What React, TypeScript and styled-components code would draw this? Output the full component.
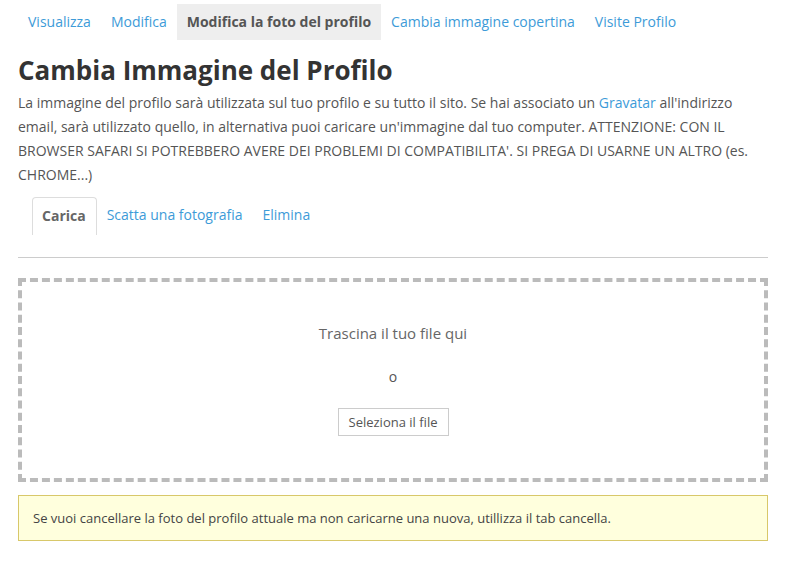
import React from "react";
import styled, { createGlobalStyle } from "styled-components";

const Global = createGlobalStyle`
  html, body { margin: 0; padding: 0; background: #fff; }
  body { font-family: "Open Sans", "Liberation Sans", sans-serif; color: #555; font-size: 14px; }
  * { box-sizing: border-box; }
`;

const Page = styled.div`
  padding: 4px 23px 0 18px;
`;

const TopNav = styled.nav`
  display: flex;
`;

const TopTab = styled.a<{ $active?: boolean }>`
  display: block;
  height: 36px;
  line-height: 36px;
  padding: 0 10px;
  font-size: 14px;
  text-decoration: none;
  color: ${(p) => (p.$active ? "#555" : "#3d9bd8")};
  font-weight: ${(p) => (p.$active ? 700 : 400)};
  background: ${(p) => (p.$active ? "#eee" : "transparent")};
`;

const Title = styled.h1`
  margin: 12px 0 0;
  font-size: 26px;
  line-height: 36px;
  font-weight: 700;
  color: #333;
`;

const Intro = styled.p`
  margin: 3px 0 0;
  font-size: 14px;
  line-height: 24px;
  color: #555;
`;

const Link = styled.a`
  color: #3d9bd8;
  text-decoration: none;
`;

const SubTabs = styled.div`
  display: flex;
  padding: 10px 0 0 14px;
`;

const SubTab = styled.a<{ $active?: boolean }>`
  display: block;
  height: 38px;
  line-height: ${(p) => (p.$active ? "35px" : "36px")};
  padding: ${(p) => (p.$active ? "0 10px 0 9px" : "0 10px")};
  font-size: 14px;
  text-decoration: none;
  border: ${(p) => (p.$active ? "1px solid #ddd" : "none")};
  border-bottom: none;
  border-radius: 4px 4px 0 0;
  color: ${(p) => (p.$active ? "#666" : "#3d9bd8")};
  font-weight: ${(p) => (p.$active ? 700 : 400)};
`;

const Rule = styled.hr`
  margin: 22px 0 0;
  border: none;
  border-top: 1px solid #ccc;
`;

const DropZone = styled.div`
  margin-top: 20px;
  height: 204px;
  border: 4px dashed #bbb;
  display: flex;
  flex-direction: column;
  align-items: center;
  padding-top: 40px;
`;

const DropText = styled.div`
  font-size: 15px;
  line-height: 22px;
  color: #666;
`;

const OrText = styled.div`
  margin-top: 22px;
  font-size: 14px;
  line-height: 22px;
  color: #555;
`;

const FileButton = styled.button`
  margin-top: 20px;
  height: 28px;
  width: 111px;
  padding: 0;
  background: #fff;
  border: 1px solid #ccc;
  font-family: "Open Sans", "Liberation Sans", sans-serif;
  font-size: 13px;
  color: #555;
`;

const Notice = styled.div`
  margin-top: 13px;
  height: 46px;
  display: flex;
  align-items: center;
  padding: 0 14px;
  background: #ffffdd;
  border: 1px solid #d8c86a;
  font-size: 13px;
  color: #444;
`;

export default function App() {
  return (
    <>
      <Global />
      <Page>
        <TopNav>
          <TopTab href="#">Visualizza</TopTab>
          <TopTab href="#">Modifica</TopTab>
          <TopTab $active>Modifica la foto del profilo</TopTab>
          <TopTab href="#">Cambia immagine copertina</TopTab>
          <TopTab href="#">Visite Profilo</TopTab>
        </TopNav>
        <Title>Cambia Immagine del Profilo</Title>
        <Intro>
          La immagine del profilo sarà utilizzata sul tuo profilo e su tutto il sito. Se hai associato un{" "}
          <Link href="#">Gravatar</Link> all'indirizzo email, sarà utilizzato quello, in alternativa puoi caricare
          un'immagine dal tuo computer. ATTENZIONE: CON IL BROWSER SAFARI SI POTREBBERO AVERE DEI PROBLEMI DI
          COMPATIBILITA'. SI PREGA DI USARNE UN ALTRO (es. CHROME...)
        </Intro>
        <SubTabs>
          <SubTab $active>Carica</SubTab>
          <SubTab href="#">Scatta una fotografia</SubTab>
          <SubTab href="#">Elimina</SubTab>
        </SubTabs>
        <Rule />
        <DropZone>
          <DropText>Trascina il tuo file qui</DropText>
          <OrText>o</OrText>
          <FileButton>Seleziona il file</FileButton>
        </DropZone>
        <Notice>Se vuoi cancellare la foto del profilo attuale ma non caricarne una nuova, utillizza il tab cancella.</Notice>
      </Page>
    </>
  );
}
